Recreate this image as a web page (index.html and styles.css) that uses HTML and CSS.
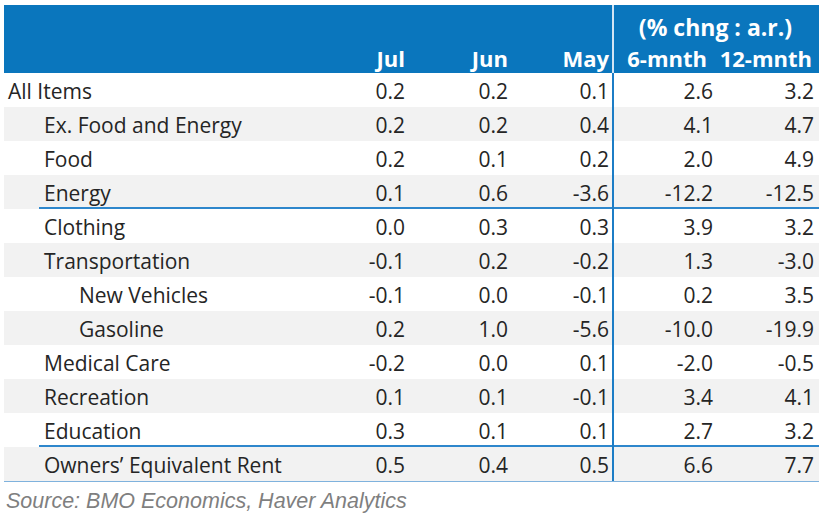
FILE: index.html
```html
<!DOCTYPE html>
<html lang="en">
<head>
<meta charset="utf-8">
<title>CPI table</title>
<link rel="stylesheet" href="styles.css">
</head>
<body>
<div class="wrap">
  <div class="table">
    <div class="head">
      <div class="hrow hrow-top">
        <div class="hc"></div><div class="hc"></div><div class="hc"></div><div class="hc"></div>
        <div class="hc span2 sep">(% chng : a.r.)</div>
      </div>
      <div class="hrow hrow-bot">
        <div class="hc"></div>
        <div class="hc num">Jul</div>
        <div class="hc num">Jun</div>
        <div class="hc num">May</div>
        <div class="hc num sep h6">6-mnth</div>
        <div class="hc num h12">12-mnth</div>
      </div>
    </div>
    <div class="row"><div class="lab l0">All Items</div><div class="num">0.2</div><div class="num">0.2</div><div class="num">0.1</div><div class="num sep">2.6</div><div class="num last">3.2</div></div>
    <div class="row alt"><div class="lab l1">Ex. Food and Energy</div><div class="num">0.2</div><div class="num">0.2</div><div class="num">0.4</div><div class="num sep">4.1</div><div class="num last">4.7</div></div>
    <div class="row"><div class="lab l1">Food</div><div class="num">0.2</div><div class="num">0.1</div><div class="num">0.2</div><div class="num sep">2.0</div><div class="num last">4.9</div></div>
    <div class="row alt rule"><div class="lab l1">Energy</div><div class="num">0.1</div><div class="num">0.6</div><div class="num">-3.6</div><div class="num sep">-12.2</div><div class="num last">-12.5</div></div>
    <div class="row"><div class="lab l1">Clothing</div><div class="num">0.0</div><div class="num">0.3</div><div class="num">0.3</div><div class="num sep">3.9</div><div class="num last">3.2</div></div>
    <div class="row alt"><div class="lab l1">Transportation</div><div class="num">-0.1</div><div class="num">0.2</div><div class="num">-0.2</div><div class="num sep">1.3</div><div class="num last">-3.0</div></div>
    <div class="row"><div class="lab l2">New Vehicles</div><div class="num">-0.1</div><div class="num">0.0</div><div class="num">-0.1</div><div class="num sep">0.2</div><div class="num last">3.5</div></div>
    <div class="row alt"><div class="lab l2">Gasoline</div><div class="num">0.2</div><div class="num">1.0</div><div class="num">-5.6</div><div class="num sep">-10.0</div><div class="num last">-19.9</div></div>
    <div class="row"><div class="lab l1">Medical Care</div><div class="num">-0.2</div><div class="num">0.0</div><div class="num">0.1</div><div class="num sep">-2.0</div><div class="num last">-0.5</div></div>
    <div class="row alt"><div class="lab l1">Recreation</div><div class="num">0.1</div><div class="num">0.1</div><div class="num">-0.1</div><div class="num sep">3.4</div><div class="num last">4.1</div></div>
    <div class="row rule"><div class="lab l1">Education</div><div class="num">0.3</div><div class="num">0.1</div><div class="num">0.1</div><div class="num sep">2.7</div><div class="num last">3.2</div></div>
    <div class="row alt end"><div class="lab l1">Owners’ Equivalent Rent</div><div class="num">0.5</div><div class="num">0.4</div><div class="num">0.5</div><div class="num sep">6.6</div><div class="num last">7.7</div></div>
  </div>
  <p class="source">Source: BMO Economics, Haver Analytics</p>
</div>
</body>
</html>
```
FILE: styles.css
```css
html, body {
  margin: 0;
  padding: 0;
  background: #ffffff;
}

.wrap {
  padding: 5px 0 0 4px;
}

.table {
  width: 815px;
  font-family: "Open Sans", "Noto Sans", sans-serif;
  font-size: 21px;
  color: #252525;
}

.head {
  background: #0a76bd;
  color: #ffffff;
  font-weight: 700;
  font-size: 22px;
}

.hrow,
.row {
  display: grid;
  grid-template-columns: 304px 100px 103px 101px 104px 103px;
}

.hrow-top {
  height: 38px;
}

.hrow-bot {
  height: 30px;
}

.hc {
  display: flex;
  align-items: flex-end;
  box-sizing: border-box;
  line-height: normal;
  white-space: nowrap;
}

.hc.num {
  justify-content: flex-end;
  padding-right: 3px;
}

.hc.span2 {
  grid-column: span 2;
  justify-content: center;
  padding-right: 2px;
  font-size: 23px;
}

.hc.sep {
  border-left: 2px solid #d3e5f4;
}

.hc.h6 {
  padding-right: 9px;
}

.hc.h12 {
  padding-right: 7px;
}

.row {
  height: 34px;
  box-sizing: border-box;
}

.row > div {
  display: flex;
  align-items: flex-end;
  padding-bottom: 2px;
  box-sizing: border-box;
  white-space: nowrap;
}

.row.alt {
  background-color: #f2f2f2;
}

.row.rule {
  background-image: linear-gradient(#2e87cc, #2e87cc);
  background-repeat: no-repeat;
  background-position: 35px 100%;
  background-size: calc(100% - 35px) 2px;
}

.row.end {
  border-bottom: 1px solid #7fb2dd;
  height: 35px;
}

.lab.l0 {
  padding-left: 4px;
}

.lab.l1 {
  padding-left: 40px;
}

.lab.l2 {
  padding-left: 75px;
}

.row .num {
  justify-content: flex-end;
  padding-right: 3px;
}

.row .num.last {
  padding-right: 5px;
}

.row .sep {
  border-left: 2px solid #1c7dc6;
}

.source {
  margin: 7px 0 0 2px;
  font-family: "Liberation Sans", Arial, sans-serif;
  font-style: italic;
  font-size: 21.5px;
  line-height: 24px;
  color: #7f7f7f;
}
```
